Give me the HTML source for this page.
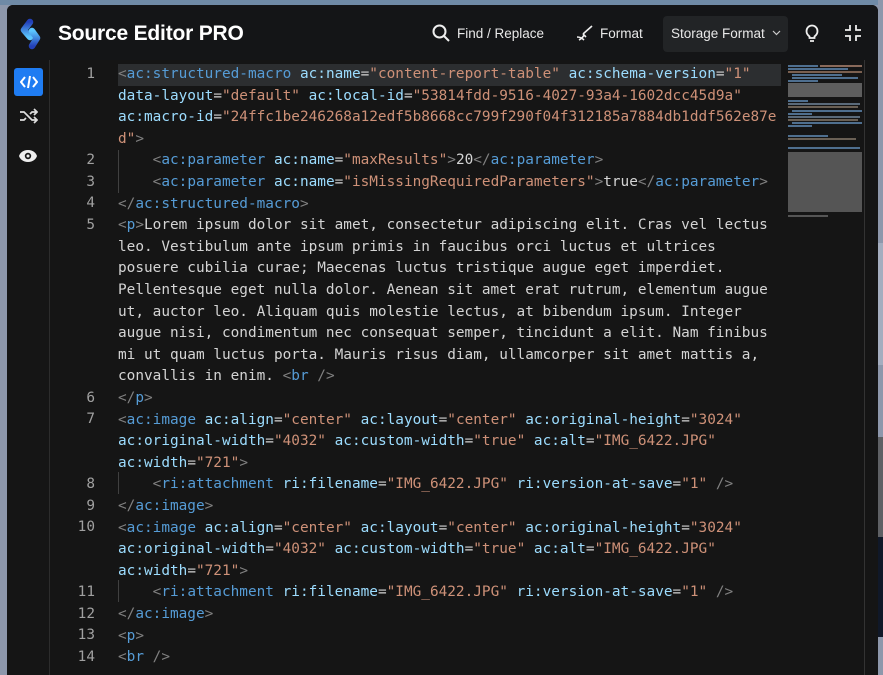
<!DOCTYPE html>
<html><head><meta charset="utf-8"><style>
*{margin:0;padding:0;box-sizing:border-box}
html,body{width:883px;height:667px;overflow:hidden;background:#8d97ab;font-family:"Liberation Sans",sans-serif}
.bgr{position:absolute;left:878px;top:0;width:5px;height:667px;background:#8d97ab}
.bgr .a{position:absolute;top:243px;height:122px;width:5px;background:#a4adbf}
.bgr .b{position:absolute;top:437px;height:100px;width:5px;background:#5e6064}
.bgr .c{position:absolute;top:537px;height:100px;width:5px;background:#101828}
.top{position:absolute;left:0;top:0;width:883px;height:5px;background:#6f8aa6}
.modal{position:absolute;left:7px;top:5px;width:871px;height:670px;background:#151515;border-radius:6px 6px 0 0;overflow:hidden}
.hdr{position:absolute;left:0;top:0;width:871px;height:55px;background:#141517}
.title{position:absolute;left:51px;top:17px;color:#fff;font-size:21px;font-weight:bold;letter-spacing:-0.2px}
.hbtn{position:absolute;top:21px;color:#e8e8e8;font-size:13.5px}
.sf{position:absolute;left:656px;top:11px;width:125px;height:36px;background:#222426;border-radius:4px;color:#e8e8e8;font-size:13.5px;padding:10px 0 0 8px}
.side{position:absolute;left:0;top:55px;width:43px;height:620px;border-right:1px solid #2c2c2c}
.active{position:absolute;left:7px;top:63px;width:29px;height:28px;background:#1f7cf2;border-radius:3px}
.code{position:absolute;left:0;top:0;font-family:"DejaVu Sans Mono",monospace;font-size:14.4px;line-height:21.6px;white-space:pre}
.row{position:absolute;left:111px;height:21.6px;color:#d4d4d4}
.ln{position:absolute;width:40px;left:48px;text-align:right;color:#a0a0a0;font-family:"DejaVu Sans Mono",monospace;font-size:14.4px;line-height:21.6px}
.t{color:#569cd6}.p{color:#808080}.a{color:#9cdcfe}.s{color:#ce9178}.x{color:#d4d4d4}
.hl{position:absolute;left:111px;top:59px;width:663px;height:21.6px;background:#2c2e30}
.guide{position:absolute;width:1px;background:#404040}
.mini{position:absolute;left:781px;top:60px;width:76px;height:160px}
.mini div{position:absolute;height:1.5px}
.vs{position:absolute;left:857px;top:55px;width:1px;height:620px;background:#333}
</style></head><body>
<div class="top"></div>
<div class="bgr"><div class="a"></div><div class="b"></div><div class="c"></div></div>
<div class="modal">
<div class="hdr">
<svg style="position:absolute;left:10px;top:12px" width="28" height="34" viewBox="0 0 28 34">
<defs><linearGradient id="g1" x1="0" y1="0" x2="0" y2="1"><stop offset="0" stop-color="#2340b8"/><stop offset="1" stop-color="#5cc6ff"/></linearGradient>
<linearGradient id="g2" x1="0" y1="0" x2="0" y2="1"><stop offset="0" stop-color="#5cc6ff"/><stop offset="1" stop-color="#2340b8"/></linearGradient></defs>
<path d="M13 5 L7 13 L13 20" fill="none" stroke="url(#g1)" stroke-width="6.5" stroke-linecap="round" stroke-linejoin="round"/>
<path d="M15 14 L20 21 L15 29" fill="none" stroke="url(#g2)" stroke-width="6.5" stroke-linecap="round" stroke-linejoin="round"/>
</svg>
<div class="title">Source Editor PRO</div>
<svg style="position:absolute;left:425px;top:19px" width="18" height="18" viewBox="0 0 18 18" fill="none" stroke="#eee" stroke-width="2"><circle cx="7.5" cy="7.5" r="6"/><path d="M12 12l5 5"/></svg>
<div class="hbtn" style="left:450px">Find / Replace</div>
<svg style="position:absolute;left:569px;top:20px" width="18" height="16" viewBox="0 0 18 16" fill="none" stroke="#eee" stroke-width="1.6"><path d="M16 1L7 9M3 15c2-1 4-3 5-5M1 12c3 0 5 1 7 3M7 9l3 3"/></svg>
<div class="hbtn" style="left:593px">Format</div>
<div class="sf">Storage Format <svg width="9" height="6" viewBox="0 0 9 6" style="margin-left:3px;vertical-align:2px" fill="none" stroke="#ccc" stroke-width="1.2"><path d="M1 1l3.5 3.5L8 1"/></svg></div>
<svg style="position:absolute;left:798px;top:19px" width="14" height="18" viewBox="0 0 14 18" fill="none" stroke="#eee" stroke-width="1.8"><path d="M4.5 12.5C2.5 11 1.5 9 1.5 7a5.5 5.5 0 0111 0c0 2-1 4-3 5.5V14h-5z"/><path d="M5 17h4"/></svg>
<svg style="position:absolute;left:838px;top:20px" width="16" height="16" viewBox="0 0 16 16" fill="none" stroke="#eee" stroke-width="1.8"><path d="M5 0v5H0M11 0v5h5M5 16v-5H0M11 16v-5h5"/></svg>
</div>
<div class="side">
<div class="active" style="top:8px"></div>
<svg style="position:absolute;left:13px;top:15px" width="18" height="14" viewBox="0 0 18 14" fill="none" stroke="#fff" stroke-width="2"><path d="M5 2L1 7l4 5M13 2l4 5-4 5M10 1L8 13"/></svg>
<svg style="position:absolute;left:12px;top:48px" width="19" height="16" viewBox="0 0 19 16" fill="none" stroke="#ddd" stroke-width="1.7"><path d="M1 4h4l8 8h4M1 12h4l2-2M11 6l2-2h4M15 1l3 3-3 3M15 9l3 3-3 3"/></svg>
<svg style="position:absolute;left:11px;top:89px" width="20" height="14" viewBox="0 0 20 14"><path d="M10 1C5 1 2 4 1 7c1 3 4 6 9 6s8-3 9-6c-1-3-4-6-9-6z" fill="#eee"/><circle cx="10" cy="7" r="3.2" fill="#151515"/><circle cx="10" cy="7" r="1.5" fill="#eee"/></svg>
</div>
<div class="hl"></div>
<div class="guide" style="left:111px;top:145px;height:43px"></div>
<div class="guide" style="left:111px;top:467px;height:22px"></div>
<div class="guide" style="left:111px;top:575px;height:22px"></div>
<div class="code">
<div class="ln" style="top:59px">1</div>
<div class="ln" style="top:145px">2</div>
<div class="ln" style="top:167px">3</div>
<div class="ln" style="top:188px">4</div>
<div class="ln" style="top:210px">5</div>
<div class="ln" style="top:383px">6</div>
<div class="ln" style="top:404px">7</div>
<div class="ln" style="top:469px">8</div>
<div class="ln" style="top:491px">9</div>
<div class="ln" style="top:512px">10</div>
<div class="ln" style="top:577px">11</div>
<div class="ln" style="top:599px">12</div>
<div class="ln" style="top:620px">13</div>
<div class="ln" style="top:642px">14</div>
<div class="row" style="top:59px"><span class="p">&lt;</span><span class="t">ac:structured-macro</span> <span class="a">ac:name</span><span class="x">=</span><span class="s">"content-report-table"</span> <span class="a">ac:schema-version</span><span class="x">=</span><span class="s">"1"</span></div>
<div class="row" style="top:80.6px"><span class="a">data-layout</span>=<span class="s">"default"</span> <span class="a">ac:local-id</span>=<span class="s">"53814fdd-9516-4027-93a4-1602dcc45d9a"</span></div>
<div class="row" style="top:102.2px"><span class="a">ac:macro-id</span>=<span class="s">"24ffc1be246268a12edf5b8668cc799f290f04f312185a7884db1ddf562e87e</span></div>
<div class="row" style="top:123.8px"><span class="s">d"</span><span class="p">&gt;</span></div>
<div class="row" style="top:145.4px">    <span class="p">&lt;</span><span class="t">ac:parameter</span> <span class="a">ac:name</span>=<span class="s">"maxResults"</span><span class="p">&gt;</span>20<span class="p">&lt;/</span><span class="t">ac:parameter</span><span class="p">&gt;</span></div>
<div class="row" style="top:167px">    <span class="p">&lt;</span><span class="t">ac:parameter</span> <span class="a">ac:name</span>=<span class="s">"isMissingRequiredParameters"</span><span class="p">&gt;</span>true<span class="p">&lt;/</span><span class="t">ac:parameter</span><span class="p">&gt;</span></div>
<div class="row" style="top:188.6px"><span class="p">&lt;/</span><span class="t">ac:structured-macro</span><span class="p">&gt;</span></div>
<div class="row" style="top:210.2px"><span class="p">&lt;</span><span class="t">p</span><span class="p">&gt;</span>Lorem ipsum dolor sit amet, consectetur adipiscing elit. Cras vel lectus</div>
<div class="row" style="top:231.8px">leo. Vestibulum ante ipsum primis in faucibus orci luctus et ultrices</div>
<div class="row" style="top:253.4px">posuere cubilia curae; Maecenas luctus tristique augue eget imperdiet.</div>
<div class="row" style="top:275px">Pellentesque eget nulla dolor. Aenean sit amet erat rutrum, elementum augue</div>
<div class="row" style="top:296.6px">ut, auctor leo. Aliquam quis molestie lectus, at bibendum ipsum. Integer</div>
<div class="row" style="top:318.2px">augue nisi, condimentum nec consequat semper, tincidunt a elit. Nam finibus</div>
<div class="row" style="top:339.8px">mi ut quam luctus porta. Mauris risus diam, ullamcorper sit amet mattis a,</div>
<div class="row" style="top:361.4px">convallis in enim. <span class="p">&lt;</span><span class="t">br</span> <span class="p">/&gt;</span></div>
<div class="row" style="top:383px"><span class="p">&lt;/</span><span class="t">p</span><span class="p">&gt;</span></div>
<div class="row" style="top:404.6px"><span class="p">&lt;</span><span class="t">ac:image</span> <span class="a">ac:align</span>=<span class="s">"center"</span> <span class="a">ac:layout</span>=<span class="s">"center"</span> <span class="a">ac:original-height</span>=<span class="s">"3024"</span></div>
<div class="row" style="top:426.2px"><span class="a">ac:original-width</span>=<span class="s">"4032"</span> <span class="a">ac:custom-width</span>=<span class="s">"true"</span> <span class="a">ac:alt</span>=<span class="s">"IMG_6422.JPG"</span></div>
<div class="row" style="top:447.8px"><span class="a">ac:width</span>=<span class="s">"721"</span><span class="p">&gt;</span></div>
<div class="row" style="top:469.4px">    <span class="p">&lt;</span><span class="t">ri:attachment</span> <span class="a">ri:filename</span>=<span class="s">"IMG_6422.JPG"</span> <span class="a">ri:version-at-save</span>=<span class="s">"1"</span> <span class="p">/&gt;</span></div>
<div class="row" style="top:491px"><span class="p">&lt;/</span><span class="t">ac:image</span><span class="p">&gt;</span></div>
<div class="row" style="top:512.6px"><span class="p">&lt;</span><span class="t">ac:image</span> <span class="a">ac:align</span>=<span class="s">"center"</span> <span class="a">ac:layout</span>=<span class="s">"center"</span> <span class="a">ac:original-height</span>=<span class="s">"3024"</span></div>
<div class="row" style="top:534.2px"><span class="a">ac:original-width</span>=<span class="s">"4032"</span> <span class="a">ac:custom-width</span>=<span class="s">"true"</span> <span class="a">ac:alt</span>=<span class="s">"IMG_6422.JPG"</span></div>
<div class="row" style="top:555.8px"><span class="a">ac:width</span>=<span class="s">"721"</span><span class="p">&gt;</span></div>
<div class="row" style="top:577.4px">    <span class="p">&lt;</span><span class="t">ri:attachment</span> <span class="a">ri:filename</span>=<span class="s">"IMG_6422.JPG"</span> <span class="a">ri:version-at-save</span>=<span class="s">"1"</span> <span class="p">/&gt;</span></div>
<div class="row" style="top:599px"><span class="p">&lt;/</span><span class="t">ac:image</span><span class="p">&gt;</span></div>
<div class="row" style="top:620.6px"><span class="p">&lt;</span><span class="t">p</span><span class="p">&gt;</span></div>
<div class="row" style="top:642.2px"><span class="p">&lt;</span><span class="t">br</span> <span class="p">/&gt;</span></div>
</div>
<div class="mini">
<div style="top:0;left:0;width:30px;background:#4f6f8f"></div><div style="top:0;left:32px;width:42px;background:#8a6a5a"></div>
<div style="top:3px;left:0;width:60px;background:#4f6f8f"></div>
<div style="top:6px;left:0;width:74px;background:#7a6050"></div>
<div style="top:9px;left:4px;width:50px;background:#4f6f8f"></div>
<div style="top:12px;left:4px;width:66px;background:#4f6f8f"></div>
<div style="top:15px;left:0;width:30px;background:#4f6f8f"></div>
<div style="top:18px;left:0;width:74px;height:14px;background:#5e5e5e"></div>
<div style="top:35px;left:0;width:20px;background:#4f6f8f"></div>
<div style="top:38px;left:0;width:72px;background:#5a6a7a"></div>
<div style="top:41px;left:0;width:70px;background:#6a6055"></div>
<div style="top:45px;left:4px;width:70px;background:#4f6f8f"></div>
<div style="top:48px;left:0;width:24px;background:#4f6f8f"></div>
<div style="top:51px;left:0;width:72px;background:#5a6a7a"></div>
<div style="top:54px;left:0;width:70px;background:#6a6055"></div>
<div style="top:57px;left:4px;width:70px;background:#4f6f8f"></div>
<div style="top:60px;left:0;width:24px;background:#4f6f8f"></div>
<div style="top:70px;left:0;width:40px;background:#4f6f8f"></div>
<div style="top:73px;left:0;width:68px;background:#6a6055"></div>
<div style="top:82px;left:0;width:72px;background:#4f6f8f"></div>
<div style="top:87px;left:0;width:74px;height:60px;background:#555"></div>
<div style="top:150px;left:0;width:40px;background:#555"></div>
</div>
<div class="vs"></div>
</div>
</body></html>
